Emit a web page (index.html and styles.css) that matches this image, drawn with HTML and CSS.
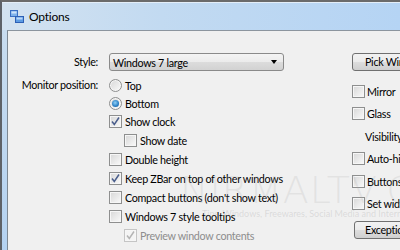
FILE: index.html
```html
<!DOCTYPE html>
<html lang="en">
<head>
  <meta charset="UTF-8" />
  <title>Options</title>
  <link rel="stylesheet" href="styles.css">
</head>
<body>
  <div class="window">
    <div class="titlebar">
      <svg class="app-icon" width="14" height="14" viewBox="0 0 14 14">
        <rect x="0.5" y="0.5" width="7" height="6" fill="#7fb2ea" stroke="#3a6fc4"/>
        <rect x="5.5" y="6.5" width="8" height="6" fill="#5c9be3" stroke="#2d5fb5"/>
        <rect x="1.5" y="1.5" width="5" height="2" fill="#cfe3fa"/>
        <rect x="6.5" y="7.5" width="6" height="2" fill="#bcd8f7"/>
      </svg>
      <span class="title">Options</span>
    </div>

    <div class="frame">
      <div class="client">
        <div class="form">
          <span class="field-label style-label">Style:</span>
          <div class="select">
            <span>Windows 7 large</span>
            <span class="arrow"></span>
          </div>

          <span class="field-label monitor-label">Monitor position:</span>
          <div class="options">
            <div class="opt opt-short"><span class="radio"></span>Top</div>
            <div class="opt opt-short"><span class="radio checked"></span>Bottom</div>
            <div class="opt">
              <span class="box"><svg width="11" height="11" viewBox="0 0 11 11"><path d="M2 5.5 L4.3 8.5 L9 1.5" fill="none" stroke="#4a5e8c" stroke-width="1.5"/></svg></span>Show clock
            </div>
            <div class="opt indent"><span class="box"></span>Show date</div>
            <div class="opt"><span class="box"></span>Double height</div>
            <div class="opt">
              <span class="box"><svg width="11" height="11" viewBox="0 0 11 11"><path d="M2 5.5 L4.3 8.5 L9 1.5" fill="none" stroke="#4a5e8c" stroke-width="1.5"/></svg></span>Keep ZBar on top of other windows
            </div>
            <div class="opt"><span class="box"></span>Compact buttons (don't show text)</div>
            <div class="opt"><span class="box"></span>Windows 7 style tooltips</div>
            <div class="opt opt-short indent disabled">
              <span class="box"><svg width="11" height="11" viewBox="0 0 11 11"><path d="M2 5.5 L4.3 8.5 L9 1.5" fill="none" stroke="#b4b4b4" stroke-width="1.5"/></svg></span>Preview window contents
            </div>
          </div>
        </div>

        <div class="side">
          <div class="button">Pick Window...</div>
          <div class="side-list">
            <div class="opt"><span class="box"></span>Mirror</div>
            <div class="opt"><span class="box"></span>Glass</div>
            <div class="opt plain">Visibility:</div>
            <div class="opt"><span class="box"></span>Auto-hide</div>
            <div class="opt"><span class="box"></span>Buttons on left</div>
            <div class="opt"><span class="box"></span>Set width</div>
          </div>
          <div class="button lower">Exceptions...</div>
        </div>

        <div class="watermark">
          <div class="mark">NIRMALTV.COM</div>
          <div class="tagline">Tips, Windows, Freewares, Social Media and Internet</div>
        </div>
      </div>
    </div>
  </div>
</body>
</html>
```

FILE: styles.css
```css
html, body {
  margin: 0;
  padding: 0;
  overflow: hidden;
}

body {
  width: 400px;
  height: 250px;
  font-family: 'Lato', sans-serif;
  font-size: 10.75px;
  letter-spacing: -0.3px;
  color: #000;
}

.window {
  height: 250px;
  display: flex;
  flex-direction: column;
  background: linear-gradient(to right, #c9dcee, #b9d5f2);
  border-top: 2px solid #6b6b6b;
  border-left: 2px solid #5e6268;
}

.titlebar {
  height: 27px;
  display: flex;
  align-items: center;
  padding-left: 8px;
  gap: 5px;
  border-top: 1px solid #e4eef8;
  background: linear-gradient(to right, #d3e2f0 0%, #c2daf1 40%, #b5d4f4 100%);
}

.app-icon {
  margin-top: 1px;
}

.title {
  font-size: 12px;
  letter-spacing: -0.2px;
  margin-top: -1px;
}

.frame {
  flex: 1;
  padding-left: 5px;
  background: linear-gradient(to bottom, #c8dcef, #b4d2f1);
}

.client {
  position: relative;
  height: 100%;
  display: flex;
  background: #f0f0f0;
  border-top: 1px solid #8c959e;
  border-left: 1px solid #7d8893;
  padding-top: 22px;
  box-sizing: border-box;
}

.form {
  display: grid;
  grid-template-columns: 90px 175px;
  column-gap: 11px;
  align-content: start;
}

.field-label {
  text-align: right;
  line-height: 18px;
}

.monitor-label {
  margin-top: 5px;
}

.select {
  height: 18px;
  box-sizing: border-box;
  display: flex;
  align-items: center;
  justify-content: space-between;
  padding: 0 6px 0 3px;
  border: 1px solid #8a8a8a;
  border-radius: 3px;
  background: linear-gradient(to bottom, #f4f4f4 0%, #ebebeb 50%, #dcdcdc 51%, #d2d2d2 100%);
}

.arrow {
  width: 0;
  height: 0;
  border-left: 3.5px solid transparent;
  border-right: 3.5px solid transparent;
  border-top: 4px solid #000;
}

.options {
  margin-top: 5px;
  display: flex;
  flex-direction: column;
}

.opt {
  height: 19px;
  display: flex;
  align-items: center;
  gap: 3px;
  white-space: nowrap;
}

.opt-short {
  height: 18px;
}

.indent {
  padding-left: 15px;
}

.disabled {
  color: #8d8d8d;
}

.box, .radio {
  width: 13px;
  height: 13px;
  box-sizing: border-box;
  flex: none;
  display: flex;
  align-items: center;
  justify-content: center;
  border: 1px solid #8e8f8f;
  background: linear-gradient(135deg, #d7d7d7, #fafafa);
  box-shadow: inset 0 0 0 1px #f6f6f6;
}

.disabled .box {
  border-color: #c5c5c5;
  background: #f4f4f4;
}

.radio {
  border-radius: 50%;
}

.radio.checked::after {
  content: "";
  width: 7px;
  height: 7px;
  border-radius: 50%;
  background: radial-gradient(circle at 45% 40%, #8fd0f7, #2a7fc4 60%, #16528f);
}

.side {
  margin-left: 68px;
  width: 80px;
  display: flex;
  flex-direction: column;
  flex: none;
}

.button {
  height: 18px;
  width: 80px;
  box-sizing: border-box;
  padding-left: 12px;
  line-height: 16px;
  white-space: nowrap;
  border: 1px solid #707070;
  border-radius: 3px;
  background: linear-gradient(to bottom, #f2f2f2 0%, #ebebeb 50%, #dddddd 51%, #cfcfcf 100%);
}

.button.lower {
  margin-top: 8px;
  margin-left: 2px;
  padding-left: 10px;
}

.side-list {
  margin-top: 11px;
  display: flex;
  flex-direction: column;
  gap: 4.5px;
}

.side-list .opt {
  height: 18px;
  gap: 2px;
}

.side-list .plain {
  padding-left: 13px;
}

.watermark {
  position: absolute;
  left: 172px;
  top: 140px;
  pointer-events: none;
  color: rgba(170, 170, 170, 0.2);
  white-space: nowrap;
  letter-spacing: 0;
}

.mark {
  font-family: 'DejaVu Sans', sans-serif;
  font-size: 38px;
  font-weight: 300;
  letter-spacing: 1px;
  line-height: 38px;
}

.tagline {
  margin-left: 22px;
  font-size: 9px;
  line-height: 10px;
  color: rgba(150, 150, 150, 0.25);
}
```
